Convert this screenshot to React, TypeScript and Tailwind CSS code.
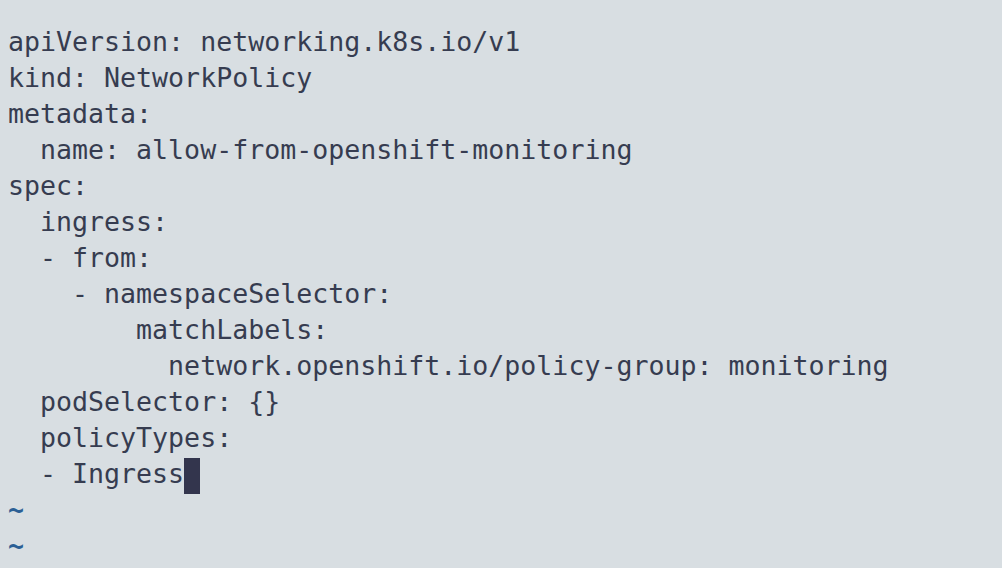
import React from "react";

const lines: string[] = [
  "apiVersion: networking.k8s.io/v1",
  "kind: NetworkPolicy",
  "metadata:",
  "  name: allow-from-openshift-monitoring",
  "spec:",
  "  ingress:",
  "  - from:",
  "    - namespaceSelector:",
  "        matchLabels:",
  "          network.openshift.io/policy-group: monitoring",
  "  podSelector: {}",
  "  policyTypes:",
];

export default function App() {
  return (
    <div
      className="w-[1002px] h-[568px] overflow-hidden bg-[#d8dee2] pl-[8px] pt-[24px] text-[#363c50] text-[26.6px] leading-[36px] whitespace-pre"
      style={{ fontFamily: '"DejaVu Sans Mono", "Liberation Mono", monospace' }}
    >
      {lines.map((l, i) => (
        <div key={i} className="h-[36px]">
          {l}
        </div>
      ))}
      <div className="h-[36px] flex">
        <span>{"  - Ingress"}</span>
        <span className="relative top-[2px] inline-block w-[16px] h-[36px] bg-[#33354d]" />
      </div>
      <div className="h-[36px] font-bold text-[#2b5f95]">~</div>
      <div className="h-[36px] font-bold text-[#2b5f95]">~</div>
    </div>
  );
}
